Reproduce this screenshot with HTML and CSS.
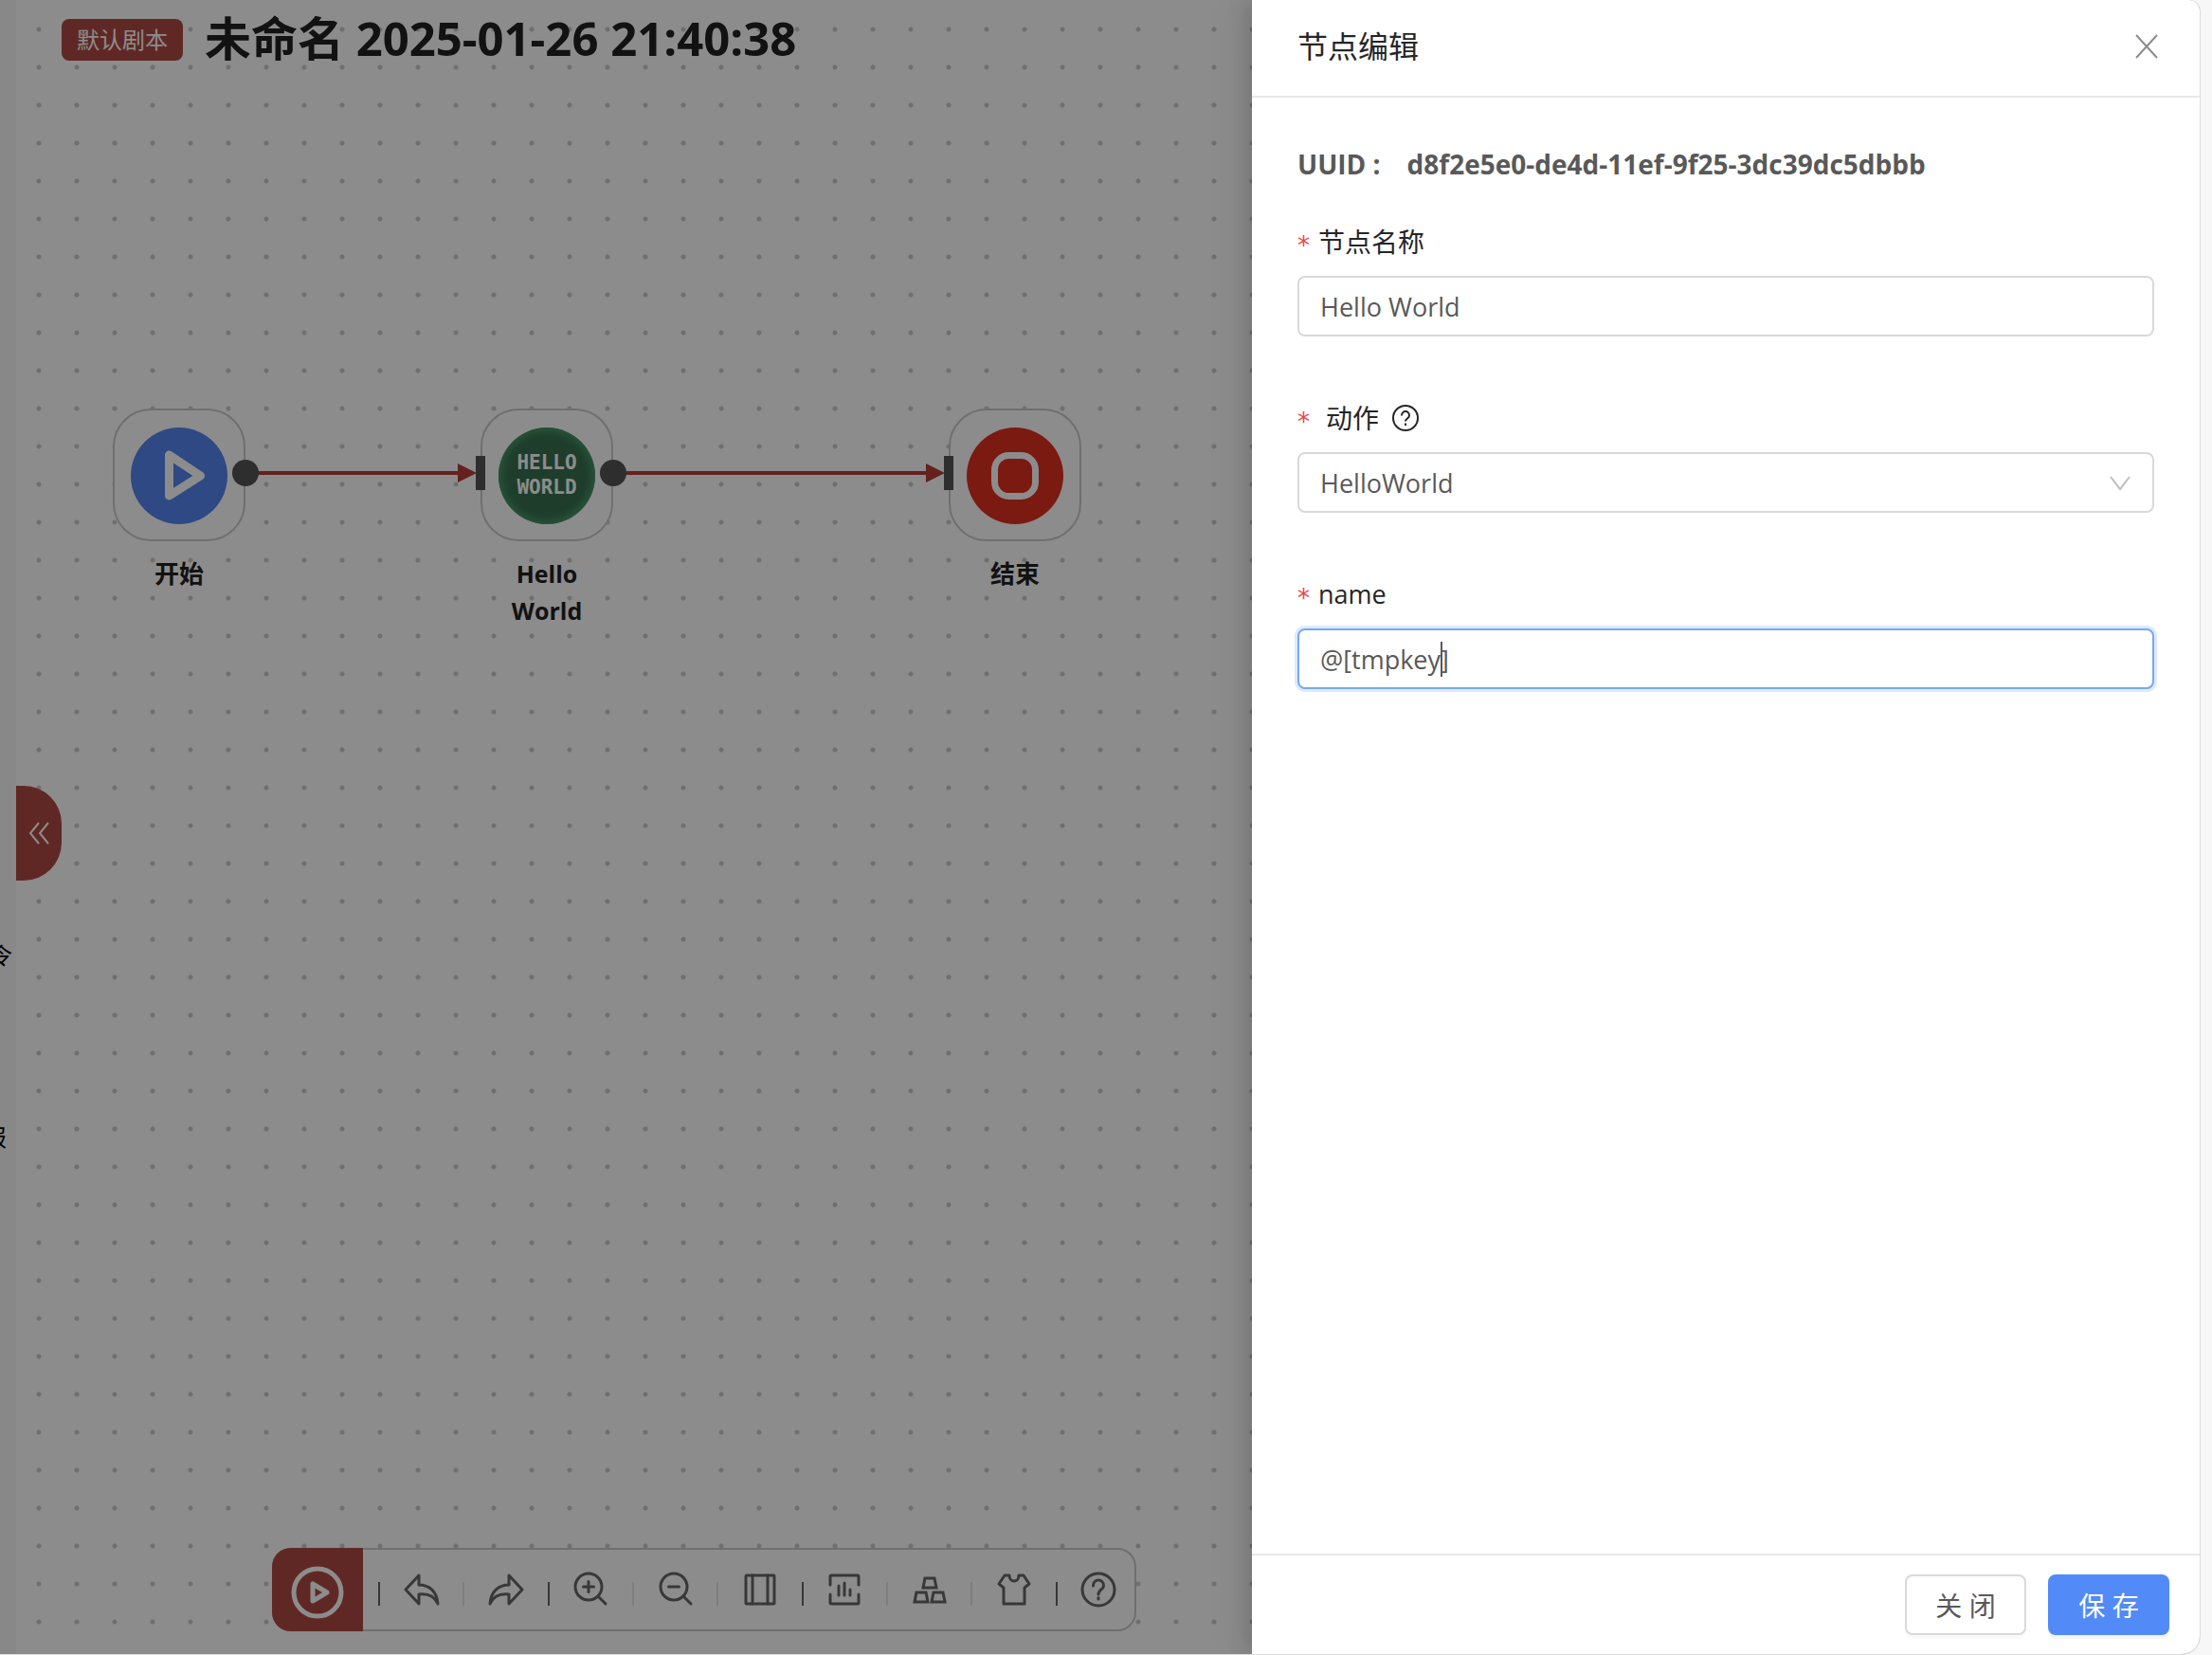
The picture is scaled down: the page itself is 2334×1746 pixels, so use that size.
FILE: index.html
```html
<!DOCTYPE html>
<html lang="zh-CN">
<head>
<meta charset="utf-8">
<title>节点编辑</title>
<link rel="stylesheet" href="styles.css">
</head>
<body>
<div class="window">
  <aside class="sidebar">
    <span class="sidebar-item">令</span>
    <span class="sidebar-item sidebar-item-wide">报</span>
  </aside>

  <main class="canvas">
    <header class="canvas-header">
      <span class="badge">默认剧本</span>
      <h1 class="canvas-title">未命名 2025-01-26 21:40:38</h1>
    </header>

    <button class="collapse" type="button" aria-label="收起">
      <svg width="24" height="24" viewBox="0 0 24 24" fill="none" stroke="currentColor" stroke-width="2"><path d="M12 1 3 12l9 11M22 1l-9 11 9 11"/></svg>
    </button>

    <svg class="edges" width="1200" height="700" viewBox="0 0 1200 700" fill="#b63c36">
      <path d="M242 497h226v4H242zM466 489l20 10-20 10z"/>
      <path d="M630 497h332v4H630zM960 489l20 10-20 10z"/>
    </svg>

    <div class="node node-start">
      <div class="node-box">
        <svg width="102" height="102" viewBox="0 0 102 102"><circle cx="51" cy="51" r="51" fill="#5485ee"/><path d="M40.500 29v43L73.500 51z" fill="none" stroke="#fff" stroke-width="9" stroke-linejoin="round"/></svg>
        <i class="port-out"></i>
      </div>
      <div class="node-label">开始</div>
    </div>

    <div class="node node-hello">
      <div class="node-box">
        <div class="hello-logo">HELLO<br>WORLD</div>
        <i class="port-in"></i>
        <i class="port-out"></i>
      </div>
      <div class="node-label node-label-latin">Hello World</div>
    </div>

    <div class="node node-end">
      <div class="node-box">
        <svg width="102" height="102" viewBox="0 0 102 102"><circle cx="51" cy="51" r="51" fill="#e03020"/><rect x="29.500" y="29.500" width="43" height="43" rx="15" fill="none" stroke="#fff" stroke-width="7"/></svg>
        <i class="port-in"></i>
      </div>
      <div class="node-label">结束</div>
    </div>

    <div class="toolbar">
      <button class="run" type="button" aria-label="运行">
        <svg width="60" height="60" viewBox="0 0 60 60" fill="none" stroke="currentColor" stroke-width="5" stroke-linejoin="round"><circle cx="30" cy="31" r="25"/><path d="M25 22v18l15-9z"/></svg>
      </button>
      <div class="tools">
        <button class="tool strong" type="button" aria-label="撤销"><svg class="icon" viewBox="0 0 40 40"><path d="M17 5 3 20l14 15V25c10-1 17 3 20 10C36 22 28 15 17 15z"/></svg></button>
        <button class="tool" type="button" aria-label="重做"><svg class="icon" viewBox="0 0 40 40"><path d="m23 5 14 15-14 15V25C13 24 6 28 3 35c1-13 9-20 20-20z"/></svg></button>
        <button class="tool strong" type="button" aria-label="放大"><svg class="icon" viewBox="0 0 40 40"><circle cx="18" cy="17" r="14"/><path d="m29 28 7 7M18 11.500v11M12.500 17h11"/></svg></button>
        <button class="tool" type="button" aria-label="缩小"><svg class="icon" viewBox="0 0 40 40"><circle cx="18" cy="17" r="14"/><path d="m29 28 7 7M12.500 17h11"/></svg></button>
        <button class="tool" type="button" aria-label="适应画布"><svg class="icon" viewBox="0 0 40 40"><rect x="5" y="5" width="30" height="30" rx="1"/><path d="M12 5v30M28 5v30"/></svg></button>
        <button class="tool strong" type="button" aria-label="实际尺寸"><svg class="icon" viewBox="0 0 40 40"><path d="M5 15V6q0-1 1-1h28q1 0 1 1v9M5 25v9q0 1 1 1h28q1 0 1-1v-9M14 16v10M20 13v13M26 20v6"/></svg></button>
        <button class="tool" type="button" aria-label="自动布局"><svg class="icon icon-sharp" viewBox="0 0 40 40"><path d="M15 8h10l2 10H13zM6 23h10l2 10H4zM24 23h10l2 10H22z"/></svg></button>
        <button class="tool" type="button" aria-label="主题"><svg class="icon" viewBox="0 0 40 40"><path d="M10 5h5c0 8 10 8 10 0h5l6 9-5 4v17H9V18l-5-4z"/></svg></button>
        <button class="tool strong" type="button" aria-label="帮助"><svg class="icon" viewBox="0 0 40 40"><circle cx="20" cy="20" r="17"/><path d="M14.500 16c0-8 11-8 11 0 0 4-5.500 4-5.500 9M20 28.500v1.500"/></svg></button>
      </div>
    </div>
  </main>

  <div class="mask"></div>

  <section class="drawer" role="dialog" aria-labelledby="drawer-title">
    <header class="drawer-header">
      <h2 class="drawer-title" id="drawer-title">节点编辑</h2>
      <button class="close" type="button" aria-label="关闭">
        <svg width="26" height="26" viewBox="0 0 26 26" fill="none" stroke="currentColor" stroke-width="2"><path d="m2 1 22 24M24 1 2 25"/></svg>
      </button>
    </header>

    <form class="drawer-body" id="node-form">
      <p class="uuid"><span>UUID :</span><span>d8f2e5e0-de4d-11ef-9f25-3dc39dc5dbbb</span></p>

      <div class="field">
        <label class="label" for="node-name">节点名称</label>
        <input class="control" id="node-name" type="text" value="Hello World">
      </div>

      <div class="field">
        <label class="label label-action" for="node-action">动作
          <svg width="28" height="28" viewBox="0 0 28 28" fill="none" stroke="currentColor" stroke-width="2"><circle cx="14" cy="14" r="13"/><path d="M10 11.500c0-6 8-6 8 0 0 3-4 3-4 6M14 19.500v2.500"/></svg>
        </label>
        <div class="control-wrap">
          <select class="control" id="node-action"><option>HelloWorld</option></select>
          <svg class="arrow" width="22" height="16" viewBox="0 0 22 16" fill="none" stroke="currentColor" stroke-width="2"><path d="m1 1 10 13L21 1"/></svg>
        </div>
      </div>

      <div class="field">
        <label class="label label-latin" for="node-param">name</label>
        <div class="control-wrap">
          <input class="control focused" id="node-param" type="text" value="@[tmpkey]">
          <i class="caret"></i>
        </div>
      </div>
    </form>

    <footer class="drawer-footer">
      <button class="btn" type="button">关 闭</button>
      <button class="btn btn-primary" type="submit" form="node-form">保 存</button>
    </footer>
  </section>
</div>
</body>
</html>
```

FILE: styles.css
```css
* {
  box-sizing: border-box;
}

body {
  margin: 0;
  height: 100vh;
  padding: 0 12px 0 0;
  overflow: hidden;
  background: #f7f7f7;
  color: #262626;
  font-family: "Open Sans", "Noto Sans CJK SC", sans-serif;
  font-size: 28px;
}

button,
input,
select {
  font: inherit;
  color: inherit;
}

button {
  padding: 0;
  border: 0;
  background: none;
}

.window {
  position: relative;
  display: flex;
  height: 100%;
  overflow: hidden;
  background: #fff;
  border: solid #dcdcdc;
  border-width: 0 1px 1px 0;
  border-radius: 0 12px 20px 0;
}

/* Sidebar, mostly scrolled out of view */
.sidebar {
  display: flex;
  flex-direction: column;
  align-items: flex-end;
  gap: 156px;
  width: 17px;
  padding-top: 990px;
  overflow: hidden;
  background: #f7f7f7;
  color: #000;
  font-size: 24px;
  line-height: 36px;
}

.sidebar-item {
  padding-right: 4px;
}

.sidebar-item-wide {
  padding-right: 10px;
}

/* Flow canvas */
.canvas {
  position: relative;
  flex: 1;
  background: radial-gradient(circle, #cbcbcb 2px, transparent 3px) 4px 11px / 40px 40px #fff;
}

.canvas-header {
  display: flex;
  align-items: center;
  gap: 23px;
  height: 84px;
  padding-left: 48px;
}

.badge {
  padding: 0 16px;
  border-radius: 8px;
  background: #b04943;
  color: #fff;
  font-size: 24px;
  line-height: 44px;
}

.canvas-title {
  margin: 0;
  padding-bottom: 4px;
  color: #222;
  font-size: 49px;
  line-height: 72px;
}

.collapse {
  position: absolute;
  top: 829px;
  left: 0;
  display: flex;
  align-items: center;
  justify-content: center;
  width: 48px;
  height: 100px;
  border-radius: 0 40px 40px 0;
  background: #b04943;
  color: #fff;
}

.edges {
  position: absolute;
  top: 0;
  left: 0;
}

.node {
  position: absolute;
  top: 431px;
  width: 140px;
  text-align: center;
}

.node-start { left: 102px; }
.node-hello { left: 490px; }
.node-end { left: 984px; }

.node-box {
  position: relative;
  display: flex;
  align-items: center;
  justify-content: center;
  height: 140px;
  padding-top: 2px;
  border: 2px solid #cbcbcb;
  border-radius: 40px;
  background: #fff;
}

.node-label {
  margin-top: 15px;
  padding: 0 20px;
  color: #222;
  font-size: 26px;
  font-weight: 700;
  line-height: 39px;
}

.node-label-latin {
  font-size: 25px;
}

.hello-logo {
  width: 102px;
  height: 102px;
  padding-top: 24px;
  border-radius: 50%;
  background: #38704f;
  box-shadow: inset 0 0 10px 3px #49a06d;
  color: #fff;
  font-family: "DejaVu Sans Mono", monospace;
  font-size: 21px;
  font-weight: 700;
  line-height: 26px;
}

.port-out,
.port-in {
  position: absolute;
  background: #545454;
}

.port-out {
  top: 52px;
  right: -16px;
  width: 28px;
  height: 28px;
  border-radius: 50%;
}

.port-in {
  top: 48px;
  left: -7px;
  width: 10px;
  height: 36px;
}

.toolbar {
  position: absolute;
  bottom: 24px;
  left: 270px;
  display: flex;
  width: 912px;
  height: 88px;
  border: 2px solid #cbcbcb;
  border-radius: 20px;
  background: #fff;
}

.run {
  display: flex;
  align-items: center;
  justify-content: center;
  width: 96px;
  margin: -2px 0 -2px -2px;
  padding-top: 4px;
  border-radius: 20px 0 0 20px;
  background: #b04943;
  color: #fff;
}

.tools {
  display: flex;
  flex: 1;
  align-items: center;
  margin: 0 -6px 0 16px;
  color: #666;
}

.tool {
  display: flex;
  flex: 1;
  align-items: center;
  justify-content: center;
}

.tool::before {
  content: "";
  width: 2px;
  height: 25px;
  margin-top: 8px;
  margin-right: auto;
  background: #e3e3e3;
}

.tool.strong::before {
  background: #666;
}

.icon {
  width: 40px;
  height: 40px;
  margin-right: auto;
  fill: none;
  stroke: currentColor;
  stroke-width: 3;
  stroke-linecap: round;
  stroke-linejoin: round;
}

.icon-sharp {
  stroke-linejoin: miter;
}

.mask {
  position: absolute;
  inset: 0;
  background: rgba(0, 0, 0, 0.45);
}

/* Drawer */
.drawer {
  position: absolute;
  top: 0;
  right: 0;
  bottom: 0;
  display: flex;
  flex-direction: column;
  width: 1000px;
  max-width: 100%;
  background: #fff;
  box-shadow: -6px 0 20px rgba(0, 0, 0, 0.14), -12px 0 48px rgba(0, 0, 0, 0.04);
}

.drawer-header {
  display: flex;
  align-items: center;
  justify-content: space-between;
  padding: 25px 43px 28px 48px;
  border-bottom: 2px solid #e8e8e8;
}

.drawer-title {
  margin: 0;
  font-size: 32px;
  font-weight: 400;
  line-height: 48px;
}

.close {
  display: flex;
  color: #8c8c8c;
}

.drawer-body {
  flex: 1;
  padding: 48px;
}

.uuid {
  display: flex;
  gap: 28px;
  margin: 0 0 38px;
  color: #595959;
  font-size: 28px;
  font-weight: 700;
  line-height: 44px;
}

.field {
  margin-bottom: 64px;
}

.label {
  display: flex;
  align-items: center;
  height: 44px;
  margin-bottom: 14px;
  line-height: 44px;
}

.label::before {
  content: "*";
  width: 22px;
  padding-top: 8px;
  color: #e5484d;
  font-family: "DejaVu Sans", sans-serif;
  font-size: 26px;
}

.label-action {
  gap: 14px;
}

.label-action::before {
  width: 16px;
}

.label-latin {
  font-size: 27px;
}

.control-wrap {
  position: relative;
}

.control {
  display: block;
  width: 100%;
  height: 64px;
  padding: 0 22px;
  border: 2px solid #d9d9d9;
  border-radius: 8px;
  outline: 0;
  appearance: none;
  background: #fff;
  color: #595959;
  font-size: 27px;
}

.focused {
  border-color: #75a9f3;
  box-shadow: 0 0 0 3px #dfe9fd;
}

.arrow {
  position: absolute;
  top: 25px;
  right: 25px;
  color: #bfbfbf;
  pointer-events: none;
}

.caret {
  position: absolute;
  top: 14px;
  left: 151px;
  width: 2px;
  height: 37px;
  background: #595959;
}

.drawer-footer {
  display: flex;
  justify-content: flex-end;
  gap: 23px;
  padding: 20px 32px;
  border-top: 2px solid #e8e8e8;
}

.btn {
  width: 128px;
  height: 64px;
  border: 2px solid #d9d9d9;
  border-radius: 8px;
  background: #fff;
  box-shadow: 0 4px 0 rgba(0, 0, 0, 0.02);
  color: #595959;
}

.btn-primary {
  border-color: #528bf7;
  background: #528bf7;
  box-shadow: 0 4px 0 rgba(0, 0, 0, 0.04);
  color: #fff;
}
```
